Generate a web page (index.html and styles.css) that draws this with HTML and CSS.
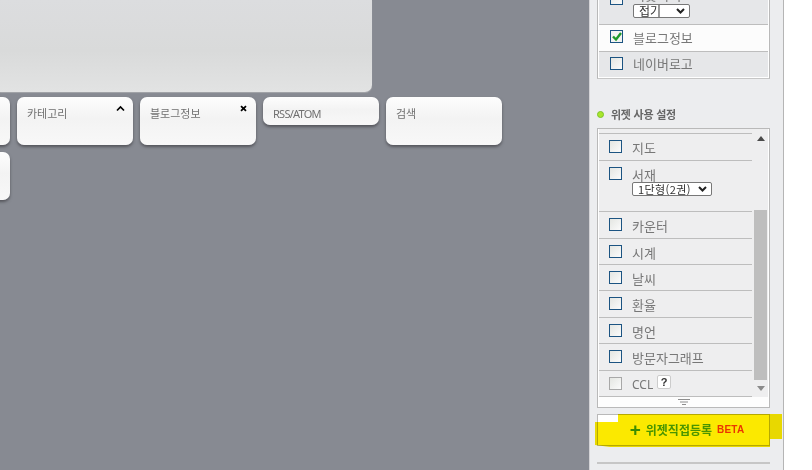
FILE: index.html
```html
<!DOCTYPE html>
<html lang="ko">
<head>
<meta charset="utf-8">
<title>위젯 설정</title>
<link rel="stylesheet" href="styles.css">
</head>
<body>
<div class="page">
  <main class="canvas">
    <div class="panel"></div>
    <div class="cards">
      <div class="card"></div>
      <div class="card"><span>카테고리</span>
        <svg class="mark" width="9" height="7" viewBox="0 0 9 7"><path d="M1 5.5 4.5 2 8 5.5" fill="none" stroke="#000" stroke-width="1.7"/></svg>
      </div>
      <div class="card"><span>블로그정보</span>
        <svg class="mark" width="9" height="7" viewBox="0 0 9 7"><path d="M2 1.2 7 5.8M7 1.2 2 5.8" fill="none" stroke="#000" stroke-width="1.8"/></svg>
      </div>
      <div class="card short"><span class="latin">RSS/ATOM</span></div>
      <div class="card"><span>검색</span></div>
      <div class="card"></div>
    </div>
  </main>
  <aside class="side">
    <div class="box top-box">
      <div class="row tint first">
        <i class="check"></i>
        <div class="stack"><span class="peek">이웃커넥트</span>
          <div class="sel fold"><span class="sel-text">접기</span><svg width="9" height="6" viewBox="0 0 9 6"><path d="M1 1 4.500 4.500 8 1" fill="none" stroke="#222" stroke-width="2"/></svg></div>
        </div>
      </div>
      <div class="row white"><i class="check on"><svg width="12" height="11" viewBox="0 0 12 11"><path d="M2 5.500 5 8.500 10 2" fill="none" stroke="#1d9a2a" stroke-width="2.400"/></svg></i><span>블로그정보</span></div>
      <div class="row tint"><i class="check"></i><span>네이버로고</span></div>
    </div>
    <h2 class="title"><i class="dot"></i>위젯 사용 설정</h2>
    <div class="box list-box">
      <div class="scroll">
        <div class="items">
          <div class="row wide"><i class="check"></i><span>지도</span></div>
          <div class="row tall"><i class="check"></i><div class="stack"><span class="peek">서재</span>
            <div class="sel book"><span class="sel-text">1단형(2권)</span><svg width="9" height="6" viewBox="0 0 9 6"><path d="M1 1 4.500 4.500 8 1" fill="none" stroke="#222" stroke-width="2"/></svg></div>
          </div></div>
          <div class="row wide"><i class="check"></i><span>카운터</span></div>
          <div class="row"><i class="check"></i><span>시계</span></div>
          <div class="row"><i class="check"></i><span>날씨</span></div>
          <div class="row wide"><i class="check"></i><span>환율</span></div>
          <div class="row"><i class="check"></i><span>명언</span></div>
          <div class="row wide"><i class="check"></i><span>방문자그래프</span></div>
          <div class="row"><i class="check off"></i><span class="ccl">CCL</span><b class="help">?</b></div>
        </div>
        <div class="bar">
          <svg class="arrow" width="10" height="5" viewBox="0 0 10 5"><path d="M5 0 9 5H1z" fill="#4a4a4a"/></svg>
          <div class="thumb"></div>
          <svg class="arrow down" width="10" height="5" viewBox="0 0 10 5"><path d="M1 0H9L5 5z" fill="#8a8a8a"/></svg>
        </div>
      </div>
      <div class="grip"><svg width="12" height="6" viewBox="0 0 12 6"><path d="M0 .5H12M2 3H10M4 5.500H8" stroke="#8f8f8f" fill="none"/></svg></div>
    </div>
    <div class="add">
      <span class="plus">+</span><span class="add-label">위젯직접등록</span><span class="beta">BETA</span>
      <svg class="marker" width="188" height="36" viewBox="0 0 188 36"><path d="M23 1H187V26H175V34H15L0 32V9H23z" fill="#fbe900"/></svg>
    </div>
    <hr class="rule">
  </aside>
  <div class="blank"></div>
</div>
</body>
</html>
```
FILE: styles.css
```css
* { box-sizing: border-box; }
html, body { margin: 0; height: 100%; background: #fff; overflow: hidden; }
body { font-family: "Noto Sans CJK KR", "Noto Sans", sans-serif; color: #666; }
.page { display: flex; width: 812px; height: 470px; overflow: hidden; }

.canvas { width: 589px; flex: none; background: #878a92; overflow: hidden; }
.panel {
  width: 372px; height: 92px;
  background: linear-gradient(180deg, #dcdddf 0%, #d9dada 55%, #e2e3e3 100%);
  border-bottom-right-radius: 7px;
  box-shadow: 0 1px 1px #a5a6aa;
}
.cards {
  display: flex; flex-wrap: wrap; align-items: flex-start; gap: 7px;
  width: 620px; margin: 5px 0 0 -106px;
}
.card {
  position: relative;
  width: 116px; height: 48px; padding: 8px 10px;
  border-radius: 7px;
  background: linear-gradient(180deg, #fdfdfd 0%, #f3f3f3 45%, #f8f8f8 100%);
  box-shadow: 0 2px 3px #55565c;
  font-size: 11px; line-height: 16px; color: #707070;
}
.card.short { height: 28px; }
.card:nth-child(6) { margin-right: 400px; }
.latin { font-family: "Noto Sans", sans-serif; letter-spacing: -.75px; }
.mark { position: absolute; top: 8px; right: 8px; }

.side {
  width: 195px; flex: none; padding: 0 13px 0 7px; height: 470px;
  background: #ecedef;
  border-left: 1px solid #d3d3d6; border-right: 1px solid #b5b5b5;
}
.blank { flex: 1; background: #fff; }

.box { border: 1px solid #b9b9b9; width: 173px; }
.top-box { height: 79px; border-top: 0; border-bottom-color: #c6c6c6; padding: 0 1px 1px; background: #fff; }
.row {
  display: flex; align-items: flex-start; gap: 10px;
  height: 26px; padding: 6px 0 0 10px;
  border-bottom: 1px solid #bdbdbd;
  font-size: 13px; line-height: 16px; color: #777;
}
.top-box .row { padding: 5px 0 0 11px; line-height: 14px; }
.tint { background: #e6e7e9; }
.white { background: #fcfcfc; }
.top-box .row.white { height: 27px; line-height: 16px; }
.top-box .row.first { height: 25px; padding-top: 0; }
.first .check { margin-top: -8px; }
.first .stack { margin-top: -14px; }
.top-box .row:last-child { border-bottom: 0; height: 25px; }

.check {
  display: block; flex: none; position: relative;
  width: 13px; height: 13px;
  border: 1px solid #1c5482;
  background: linear-gradient(135deg, #e4e6e2, #fbfbfb);
}
.check svg { position: absolute; top: 0; left: 0; }
.check.off { border-color: #a8a8a8; }
.check.on { background: #f2f4f2; }

.stack { display: flex; flex-direction: column; }
.peek { height: 15px; line-height: 15px; }
.first .peek { height: 18px; line-height: 18px; }
.sel {
  display: flex; align-items: center; justify-content: space-between;
  height: 14px; padding: 0 4px 0 5px;
  border: 1px solid #777; border-radius: 2px; background: #fff;
}
.sel-text { font-size: 12px; line-height: 12px; color: #333; }
.fold { width: 57px; }
.book { width: 80px; }
.book .sel-text { font-size: 11px; letter-spacing: .4px; }

.title {
  display: flex; align-items: center; gap: 7px;
  margin: 28px 0 6px 0; height: 15px;
  font-size: 11px; font-weight: 700; line-height: 15px; color: #666; letter-spacing: -.25px;
}
.dot {
  width: 7px; height: 7px; border-radius: 50%;
  background: #a9e62c; border: 1px solid #7cc42a;
}

.list-box { height: 280px; padding: 0 1px; background: #fff; }
.scroll { display: flex; height: 268px; background: #eeeeef; padding-top: 4px; }
.items { width: 153px; flex: none; border-top: 1px solid #bdbdbd; }
.items .row.wide { height: 27px; }
.items .row.tall { height: 51px; }
.ccl { font-family: "Noto Sans", sans-serif; font-size: 12px; margin-right: -6px; }
.help {
  width: 14px; height: 14px; margin-top: -2px;
  background: #fff; border: 1px solid #ccc; border-radius: 2px;
  font: 700 11px/12px "Liberation Sans", sans-serif; color: #333; text-align: center;
}
.bar { flex: 1; position: relative; }
.arrow { position: absolute; left: 4px; top: 3px; }
.arrow.down { top: 253px; }
.thumb { position: absolute; left: 2px; width: 13px; top: 77px; height: 170px; background: #bebebe; }
.grip { display: flex; justify-content: center; align-items: center; height: 10px; background: #fdfdfd; }

.add {
  position: relative;
  display: flex; align-items: center; justify-content: center;
  width: 173px; height: 32px; margin-top: 6px; padding-left: 7px;
  border: 1px solid #b9b9b9; background: #fff;
}
.marker { position: absolute; top: -2px; left: -3px; mix-blend-mode: multiply; }
.plus, .add-label, .beta { font-weight: 700; }
.plus { color: #3c9a0c; font: 700 19px/20px "Liberation Sans", sans-serif; margin-right: 5px; }
.add-label { color: #4aa30a; font-size: 12px; line-height: 16px; }
.beta { color: #ef3a12; font: 700 10px/16px "Liberation Sans", sans-serif; margin-left: 5px; letter-spacing: .2px; }
.rule { width: 173px; margin: 16px 0 0; border: 0; border-top: 2px solid #c6c6c6; }
```
